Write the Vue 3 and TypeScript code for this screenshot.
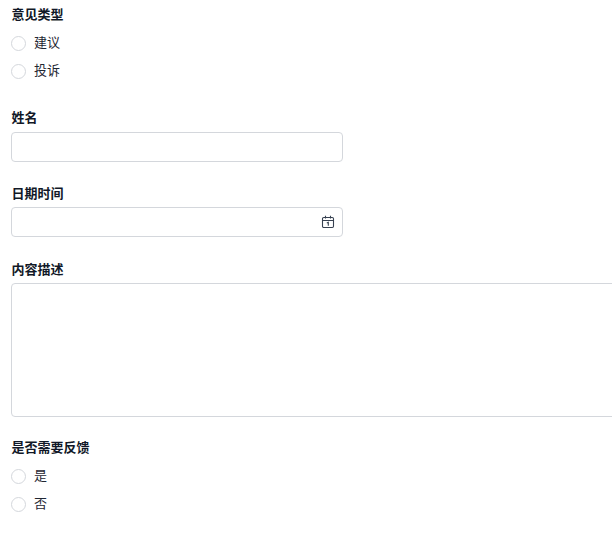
<script setup lang="ts">
const typeOptions: string[] = ['建议', '投诉']
const feedbackOptions: string[] = ['是', '否']
</script>

<template>
  <form class="form" @submit.prevent>
    <section class="field radios-field">
      <div class="label">意见类型</div>
      <div class="radio-group">
        <label v-for="o in typeOptions" :key="o" class="radio">
          <span class="circle"></span><span class="radio-text">{{ o }}</span>
        </label>
      </div>
    </section>
    <section class="field">
      <div class="label">姓名</div>
      <div class="input"></div>
    </section>
    <section class="field">
      <div class="label">日期时间</div>
      <div class="input date">
        <svg class="cal" width="14" height="14" viewBox="0 0 14 14" fill="none" stroke="#374151" stroke-width="1.1">
          <rect x="1.5" y="2.5" width="11" height="10" rx="1.2" />
          <path d="M1.5 5.5h11M4.5 .8v2.7M9.5 .8v2.7" />
          <path d="M5.8 8 7.3 7.3V10.8" />
        </svg>
      </div>
    </section>
    <section class="field textarea-field">
      <div class="label">内容描述</div>
      <div class="textarea"></div>
    </section>
    <section class="field">
      <div class="label">是否需要反馈</div>
      <div class="radio-group">
        <label v-for="o in feedbackOptions" :key="o" class="radio">
          <span class="circle"></span><span class="radio-text">{{ o }}</span>
        </label>
      </div>
    </section>
  </form>
</template>

<style>
html, body { margin: 0; background: #fff; overflow: hidden; }
</style>

<style scoped>
.form {
  width: 612px;
  height: 553px;
  box-sizing: border-box;
  padding: 5px 0 0 11px;
  overflow: hidden;
  font-family: "Liberation Sans", "Noto Sans CJK SC", sans-serif;
  color: #1f2733;
  font-size: 13px;
}
.field { margin-bottom: 22.5px; }
.radios-field { margin-bottom: 23.25px; }
.textarea-field { margin-bottom: 21.25px; }
.label {
  font-size: 13px;
  font-weight: 700;
  line-height: 20px;
  margin-bottom: 3.25px;
  padding-left: 0.5px;
  color: #111827;
}
.radio-group { display: flex; flex-direction: column; padding-top: 0.75px; }
.radio { display: flex; align-items: center; height: 28px; }
.circle {
  width: 13px;
  height: 13px;
  border: 1px solid #d4d7dc;
  border-radius: 50%;
  background: #fff;
}
.radio-text { margin-left: 8px; line-height: 28px; }
.input {
  width: 330px;
  height: 28px;
  border: 1px solid #d4d7dc;
  border-radius: 4px;
  background: #fff;
}
.date { display: flex; align-items: center; justify-content: flex-end; }
.cal { margin-right: 7px; }
.textarea {
  width: 640px;
  height: 132px;
  border: 1px solid #d4d7dc;
  border-radius: 4px;
  background: #fff;
}
</style>
